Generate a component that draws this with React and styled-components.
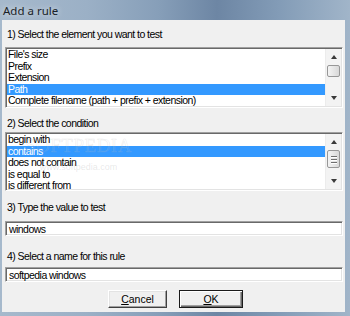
import React from 'react'
import styled, { createGlobalStyle, css } from 'styled-components'

const GlobalStyle = createGlobalStyle`
  body {
    margin: 0;
    background: #8fa4ba;
  }
`

const uiFont = `"Liberation Sans", Arial, sans-serif`

const Window = styled.div`
  width: 350px;
  height: 316px;
  display: flex;
  flex-direction: column;
  background: linear-gradient(90deg, #a6b9cc 0%, #9bb0c6 25%, #879fb9 45%, #6d86a4 62%, #839cb7 80%, #a1b5c9 100%);
  overflow: hidden;
`

const TitleBar = styled.div`
  height: 20px;
  flex: none;
  display: flex;
  align-items: center;
  padding-left: 3px;
  font-family: "Noto Sans", "Open Sans", sans-serif;
  font-size: 11.5px;
  color: #1a1f28;
  text-shadow: 0 0 6px rgba(255, 255, 255, .8);
`

const Frame = styled.div`
  flex: 1;
  display: flex;
  padding: 0 5px 4px 2px;
`

const Client = styled.div`
  flex: 1;
  position: relative;
  display: flex;
  flex-direction: column;
  background: #f0f0f0;
  padding: 8px 2px 0 3px;
  font-family: ${uiFont};
  font-size: 10.5px;
  letter-spacing: -0.55px;
  color: #000;
`

const Label = styled.div`
  height: 13px;
  line-height: 13px;
  padding-left: 2px;
  margin-bottom: ${({ gap }) => gap}px;
  white-space: nowrap;
`

const sunken = css`
  box-sizing: border-box;
  background: #fff;
  border: 1px solid;
  border-color: #a0a0a0 #fff #fff #a0a0a0;
  box-shadow: inset 1px 1px 0 #696969, inset -1px -1px 0 #e3e3e3;
`

const ListBox = styled.div`
  ${sunken};
  height: ${({ h }) => h}px;
  padding: 1px;
  display: flex;
  margin-bottom: ${({ gap }) => gap}px;
`

const Items = styled.div`
  flex: 1;
  overflow: hidden;
`

const Item = styled.div`
  height: 11.5px;
  line-height: 11.5px;
  padding-left: 1px;
  white-space: nowrap;
  ${({ selected }) =>
    selected &&
    css`
      background: #3399ff;
      color: #fff;
    `}
`

const ScrollBar = styled.div`
  width: 15px;
  display: flex;
  flex-direction: column;
  background: #f3f3f3;
  border-left: 1px solid #ececec;
`

const ArrowBtn = styled.div`
  height: 16px;
  flex: none;
  display: flex;
  align-items: center;
  justify-content: center;

  &::after {
    content: '';
    border-left: 3.5px solid transparent;
    border-right: 3.5px solid transparent;
    ${({ down }) =>
      down
        ? css`border-top: 4px solid #3a3a3a;`
        : css`border-bottom: 4px solid #3a3a3a;`}
  }
`

const Track = styled.div`
  flex: 1;
  padding: 0 1px;
`

const Thumb = styled.div`
  box-sizing: border-box;
  height: ${({ size }) => size}px;
  border: 1px solid #979797;
  border-radius: 2px;
  background: linear-gradient(90deg, #f4f4f4, #e6e6e6 50%, #d8d8d8);
  display: flex;
  flex-direction: column;
  align-items: center;
  justify-content: center;
  gap: 2px;
`

const Grip = styled.span`
  width: 6px;
  height: 1px;
  background: #6e6e6e;
  box-shadow: 0 1px 0 #fff;
`

const TextBox = styled.div`
  ${sunken};
  height: 15px;
  line-height: 12px;
  padding: 1px 3px;
  white-space: nowrap;
  margin-bottom: ${({ gap }) => gap}px;
`

const ButtonRow = styled.div`
  display: flex;
  justify-content: center;
  gap: 12px;
  padding-left: 3px;
`

const Button = styled.div`
  box-sizing: border-box;
  width: ${({ w }) => w}px;
  height: 18px;
  display: flex;
  align-items: center;
  justify-content: center;
  background: #f0f0f0;
  letter-spacing: 0;
  border: 1px solid;
  border-color: #fff #404040 #404040 #fff;
  box-shadow: inset -1px -1px 0 #a0a0a0, inset 1px 1px 0 #e3e3e3;
  ${({ isDefault }) =>
    isDefault &&
    css`
      border-color: #1a1a1a;
      box-shadow: inset 1px 1px 0 #fff, inset -1px -1px 0 #696969, inset -2px -2px 0 #a0a0a0;
    `}
`

const Watermark = styled.div`
  position: absolute;
  left: 23px;
  top: 116px;
  pointer-events: none;
  font-family: "Liberation Serif", serif;
  letter-spacing: 0.5px;
  color: rgba(255, 255, 255, .08);
  -webkit-text-stroke: 0.6px rgba(170, 170, 170, .22);
  text-align: center;

  .big {
    font-size: 19px;
    line-height: 20px;
  }

  .small {
    font-family: ${uiFont};
    letter-spacing: 0;
    -webkit-text-stroke: 0;
    color: rgba(150, 150, 150, .22);
    font-size: 9px;
    margin-top: 6px;
  }
`

const ListScroll = ({ thumbTop, thumbSize, grip }) => (
  <ScrollBar>
    <ArrowBtn />
    <Track>
      <div style={{ height: thumbTop }} />
      <Thumb size={thumbSize}>
        {grip && (
          <>
            <Grip />
            <Grip />
            <Grip />
          </>
        )}
      </Thumb>
    </Track>
    <ArrowBtn down />
  </ScrollBar>
)

const elements = [
  "File's size",
  'Prefix',
  'Extension',
  'Path',
  'Complete filename (path + prefix + extension)',
]

const conditions = [
  'begin with',
  'contains',
  'does not contain',
  'is equal to',
  'is different from',
]

export default function App() {
  return (
    <>
      <GlobalStyle />
      <Window>
        <TitleBar>Add a rule</TitleBar>
        <Frame>
          <Client>
            <Label gap={6}>1) Select the element you want to test</Label>
            <ListBox h={61} gap={9}>
              <Items>
                {elements.map((e) => (
                  <Item key={e} selected={e === 'Path'}>{e}</Item>
                ))}
              </Items>
              <ListScroll thumbTop={0} thumbSize={12} />
            </ListBox>

            <Label gap={2}>2) Select the condition</Label>
            <ListBox h={59} gap={10}>
              <Items>
                {conditions.map((c) => (
                  <Item key={c} selected={c === 'contains'}>{c}</Item>
                ))}
              </Items>
              <ListScroll thumbTop={0} thumbSize={18} grip />
            </ListBox>

            <Label gap={7}>3) Type the value to test</Label>
            <TextBox gap={14}>windows</TextBox>

            <Label gap={4}>4) Select a name for this rule</Label>
            <TextBox gap={8}>softpedia windows</TextBox>

            <ButtonRow>
              <Button w={59}><span><u>C</u>ancel</span></Button>
              <Button w={64} isDefault><span><u>O</u>K</span></Button>
            </ButtonRow>

            <Watermark>
              <div className="big">SOFTPEDIA</div>
              <div className="small">www.softpedia.com</div>
            </Watermark>
          </Client>
        </Frame>
      </Window>
    </>
  )
}
